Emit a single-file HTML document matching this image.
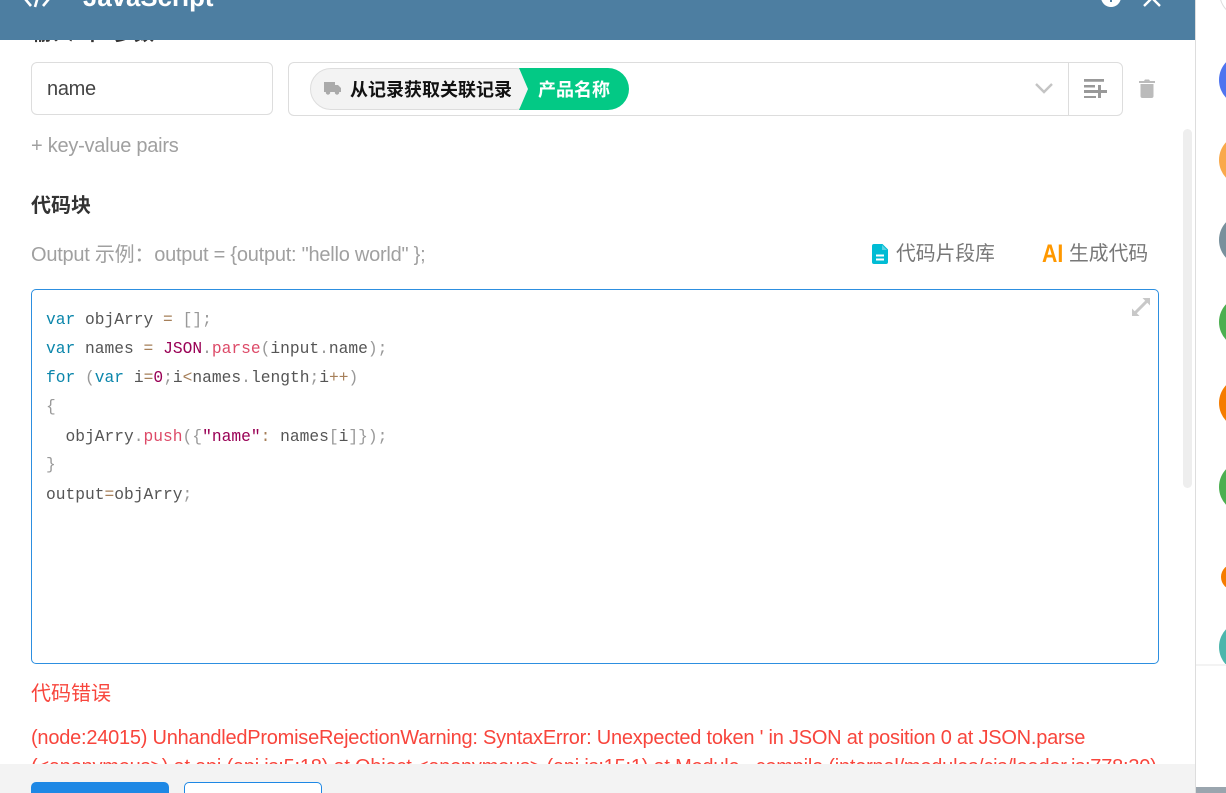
<!DOCTYPE html>
<html lang="zh"><head><meta charset="utf-8"><title>JavaScript</title>
<style>
html,body{margin:0;padding:0;background:#fff}
#r{position:relative;width:1226px;height:793px;overflow:hidden;background:#fff;font-family:"Liberation Sans","Noto Sans CJK SC",sans-serif}
#r div,#r svg{position:absolute}
.t{white-space:nowrap;line-height:1}
.code{left:46px;font-family:"Liberation Mono","Noto Sans CJK SC",monospace;font-size:16.25px;line-height:20px;height:20px;white-space:pre;color:#555}
.k{color:#0b86ab}.o{color:#a67f59}.p{color:#999}.f{color:#dd4a68}.m{color:#905}
.c{border-radius:50%;width:52px;height:52px;left:1219px}
</style></head><body><div id="r">
<div class="t" style="left:31px;top:24px;font-size:20px;font-weight:700;letter-spacing:2px;color:#333">输入 中 参数</div>
<div style="left:0;top:0;width:1195px;height:40px;background:#4d7ea1"></div>
<svg style="left:24px;top:-11px" width="26" height="22" viewBox="0 0 26 22" fill="none" stroke="#fff" stroke-width="2.6"><path d="M7 5 2 11l5 6M19 5l5 6-5 6M15 4l-4 14"/></svg>
<div class="t" style="left:83px;top:-14px;font-size:25.8px;font-weight:700;color:#fff">JavaScript</div>
<div style="left:1101px;top:-13px;width:20px;height:20px;border-radius:50%;background:#fff"></div>
<div style="left:1110px;top:-1px;width:2px;height:3px;background:#4d7ea1"></div>
<svg style="left:1142px;top:-8px" width="20" height="16" viewBox="0 0 20 16" fill="none" stroke="#fff" stroke-width="2.4"><path d="M2 14 10 6 18 14"/></svg>

<div style="left:1195px;top:0;width:1px;height:793px;background:#ddd"></div>
<div style="left:1183px;top:129px;width:9px;height:359px;border-radius:5px;background:#eee"></div>

<div style="left:31px;top:62px;width:240px;height:51px;border:1px solid #ddd;border-radius:6px"></div>
<div class="t" style="left:47px;top:79px;font-size:20px;letter-spacing:-.3px;color:#444">name</div>

<div style="left:288px;top:62px;width:833px;height:52px;border:1px solid #ddd;border-radius:6px"></div>
<div style="left:1068px;top:62px;width:1px;height:54px;background:#ddd"></div>
<div style="left:310px;top:68px;width:225px;height:40px;border:1px solid #ddd;border-radius:21px;background:#f3f3f3"></div>
<svg style="left:519px;top:68px" width="110" height="42" viewBox="0 0 110 42"><path d="M0 0H89a21 21 0 0 1 0 42H0L9 21Z" fill="#03c985"/></svg>
<svg style="left:324px;top:82px" width="17" height="13" viewBox="0 0 17 13" fill="#aaa"><path d="M0 0h11v3h3l3 3v4H0z"/><circle cx="4" cy="10.500" r="2.200"/><circle cx="13" cy="10.500" r="2.200"/></svg>
<div class="t" style="left:350px;top:81px;font-size:18px;font-weight:700;color:#111">从记录获取关联记录</div>
<div class="t" style="left:538px;top:81px;font-size:18px;font-weight:700;color:#fff">产品名称</div>
<svg style="left:1034px;top:82px" width="20" height="14" viewBox="0 0 20 14" fill="none" stroke="#c4c4c4" stroke-width="2.4"><path d="M2 2l8 8 8-8"/></svg>
<svg style="left:1084px;top:79px" width="23" height="19" viewBox="0 0 23 19" fill="#999"><path d="M0 0h20v2.800H0zM0 6h11v2.500H0zM0 11h14V6h3v5h6v3h-6v5h-3v-5H0zM0 17h12v2H0z"/></svg>
<svg style="left:1139px;top:79px" width="16" height="20" viewBox="0 0 16 20" fill="#bbb"><path d="M0 2h5l1-1.500h4L11 2h5v2H0zM1.500 5h13v12a2 2 0 0 1-2 2h-9a2 2 0 0 1-2-2z"/></svg>

<div class="t" style="left:31px;top:136px;font-size:20px;letter-spacing:-.25px;color:#a0a0a0">+ key-value pairs</div>
<div class="t" style="left:31px;top:196px;font-size:20px;font-weight:700;color:#333">代码块</div>
<div class="t" style="left:31px;top:245px;font-size:20px;letter-spacing:-.24px;color:#a0a0a0">Output 示例&#65306;output = {output: "hello world" };</div>

<svg style="left:872px;top:244px" width="16" height="20" viewBox="0 0 16 20"><path d="M2 0h8.500L16 5.500V18a2 2 0 0 1-2 2H2a2 2 0 0 1-2-2V2a2 2 0 0 1 2-2z" fill="#00bcd4"/><path d="M10 1v5h5z" fill="#fff" opacity=".35"/><path d="M4 10.500h8v2H4zM4 14.500h8v2H4z" fill="#fff"/></svg>
<div class="t" style="left:896px;top:245px;font-size:19.800px;color:#777">代码片段库</div>
<div class="t" style="left:1042px;top:242px;font-size:25px;font-weight:700;color:#ff9800;transform:scaleX(.85);transform-origin:left">AI</div>
<div class="t" style="left:1069px;top:245px;font-size:19.800px;color:#777">生成代码</div>

<div style="left:31px;top:289px;width:1126px;height:373px;border:1px solid #2d8fe0;border-radius:5px"></div>
<svg style="left:1132px;top:298px" width="18" height="18" viewBox="0 0 18 18" fill="#c8c8c8"><path d="M10.500 0H18v7.500l-2.700-2.700L4.800 15.300 7.500 18H0v-7.500l2.700 2.700L13.200 2.700z"/></svg>

<div class="code" style="top:310px"><span class="k">var</span> objArry <span class="o">=</span> <span class="p">[];</span></div>
<div class="code" style="top:339px"><span class="k">var</span> names <span class="o">=</span> <span class="m">JSON</span><span class="p">.</span><span class="f">parse</span><span class="p">(</span>input<span class="p">.</span>name<span class="p">);</span></div>
<div class="code" style="top:368px"><span class="k">for</span> <span class="p">(</span><span class="k">var</span> i<span class="o">=</span><span class="m">0</span><span class="p">;</span>i<span class="o">&lt;</span>names<span class="p">.</span>length<span class="p">;</span>i<span class="o">++</span><span class="p">)</span></div>
<div class="code" style="top:397px"><span class="p">{</span></div>
<div class="code" style="top:427px">  objArry<span class="p">.</span><span class="f">push</span><span class="p">({</span><span class="m">"name"</span><span class="o">:</span> names<span class="p">[</span>i<span class="p">]});</span></div>
<div class="code" style="top:455px"><span class="p">}</span></div>
<div class="code" style="top:485px">output<span class="o">=</span>objArry<span class="p">;</span></div>

<div class="t" style="left:31px;top:684px;font-size:20px;color:#f8453c">代码错误</div>
<div class="t" style="left:31px;top:728px;font-size:20px;letter-spacing:-.23px;color:#f8453c">(node:24015) UnhandledPromiseRejectionWarning: SyntaxError: Unexpected token ' in JSON at position 0 at JSON.parse</div>
<div class="t" style="left:31px;top:757px;font-size:20px;letter-spacing:-.22px;color:#f8453c">(&lt;anonymous&gt;) at api (api.js:5:18) at Object.&lt;anonymous&gt; (api.js:15:1) at Module._compile (internal/modules/cjs/loader.js:778:30)</div>

<div style="left:0;top:764px;width:1195px;height:29px;background:#f3f3f3"></div>
<div style="left:31px;top:782px;width:138px;height:20px;border-radius:5px;background:#1e88e5"></div>
<div style="left:184px;top:782px;width:136px;height:20px;border:1px solid #1e88e5;border-radius:5px;background:#fff"></div>

<div class="c" style="top:-35px;background:#fff;border:1px solid #ddd"></div>
<div class="c" style="top:54px;background:#4f74ef"></div>
<div class="c" style="top:134px;background:#f9a94b"></div>
<div class="c" style="top:214px;background:#78909c"></div>
<div class="c" style="top:296px;background:#4caf50"></div>
<div class="c" style="top:377px;background:#f57c00"></div>
<div class="c" style="top:461px;background:#4caf50"></div>
<div class="c" style="top:564px;left:1221px;width:26px;height:26px;background:#f57c00"></div>
<div class="c" style="top:621px;background:#4db6ac"></div>
<div style="left:1196px;top:664px;width:30px;height:2px;background:#f3f3f3"></div>
<div style="left:1196px;top:787px;width:30px;height:6px;background:#9aa5ae"></div>
</div></body></html>
